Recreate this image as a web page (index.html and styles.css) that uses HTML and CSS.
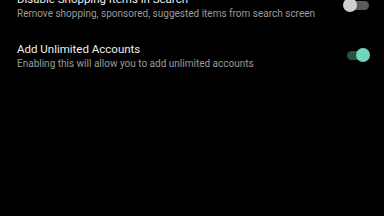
FILE: index.html
```html
<!DOCTYPE html>
<html lang="en">
<head>
  <meta charset="UTF-8">
  <meta name="viewport" content="width=device-width, initial-scale=1.0">
  <title>Settings</title>
  <link rel="stylesheet" href="styles.css">
</head>
<body>
  <ul class="settings-list">
    <li class="setting-row">
      <div class="setting-text">
        <div class="setting-title">Disable Shopping Items in Search</div>
        <div class="setting-desc">Remove shopping, sponsored, suggested items from search screen</div>
      </div>
      <div class="switch">
        <span class="switch-track"></span>
        <span class="switch-thumb"></span>
      </div>
    </li>
    <li class="setting-row">
      <div class="setting-text">
        <div class="setting-title">Add Unlimited Accounts</div>
        <div class="setting-desc">Enabling this will allow you to add unlimited accounts</div>
      </div>
      <div class="switch on">
        <span class="switch-track"></span>
        <span class="switch-thumb"></span>
      </div>
    </li>
  </ul>
</body>
</html>
```

FILE: styles.css
```css
body {
  margin: 0;
  padding: 0;
  background-color: #000;
  font-family: Roboto, "Noto Sans", sans-serif;
  overflow: hidden;
}

.settings-list {
  list-style: none;
  margin: -19px 0 0 0;
  padding: 0;
}

.setting-row {
  display: flex;
  align-items: center;
  padding: 11px 14px 11px 17px;
}

.setting-text {
  flex: 1;
}

.setting-title {
  font-size: 11.5px;
  line-height: 15px;
  color: #ececec;
}

.setting-desc {
  font-size: 10px;
  line-height: 13px;
  color: #9b9b9b;
}

.switch {
  position: relative;
  width: 27px;
  height: 14px;
  margin-top: -2px;
}

.switch-track {
  position: absolute;
  left: 4px;
  top: 2.5px;
  width: 22px;
  height: 9px;
  border-radius: 5px;
  background-color: #5b5b5b;
}

.switch-thumb {
  position: absolute;
  left: 0;
  top: 0;
  width: 14px;
  height: 14px;
  border-radius: 50%;
  background-color: #cfcfcf;
}

.switch.on .switch-track {
  background-color: #2c4f48;
}

.switch.on .switch-thumb {
  left: 13px;
  background-color: #6fd6bd;
}
```
